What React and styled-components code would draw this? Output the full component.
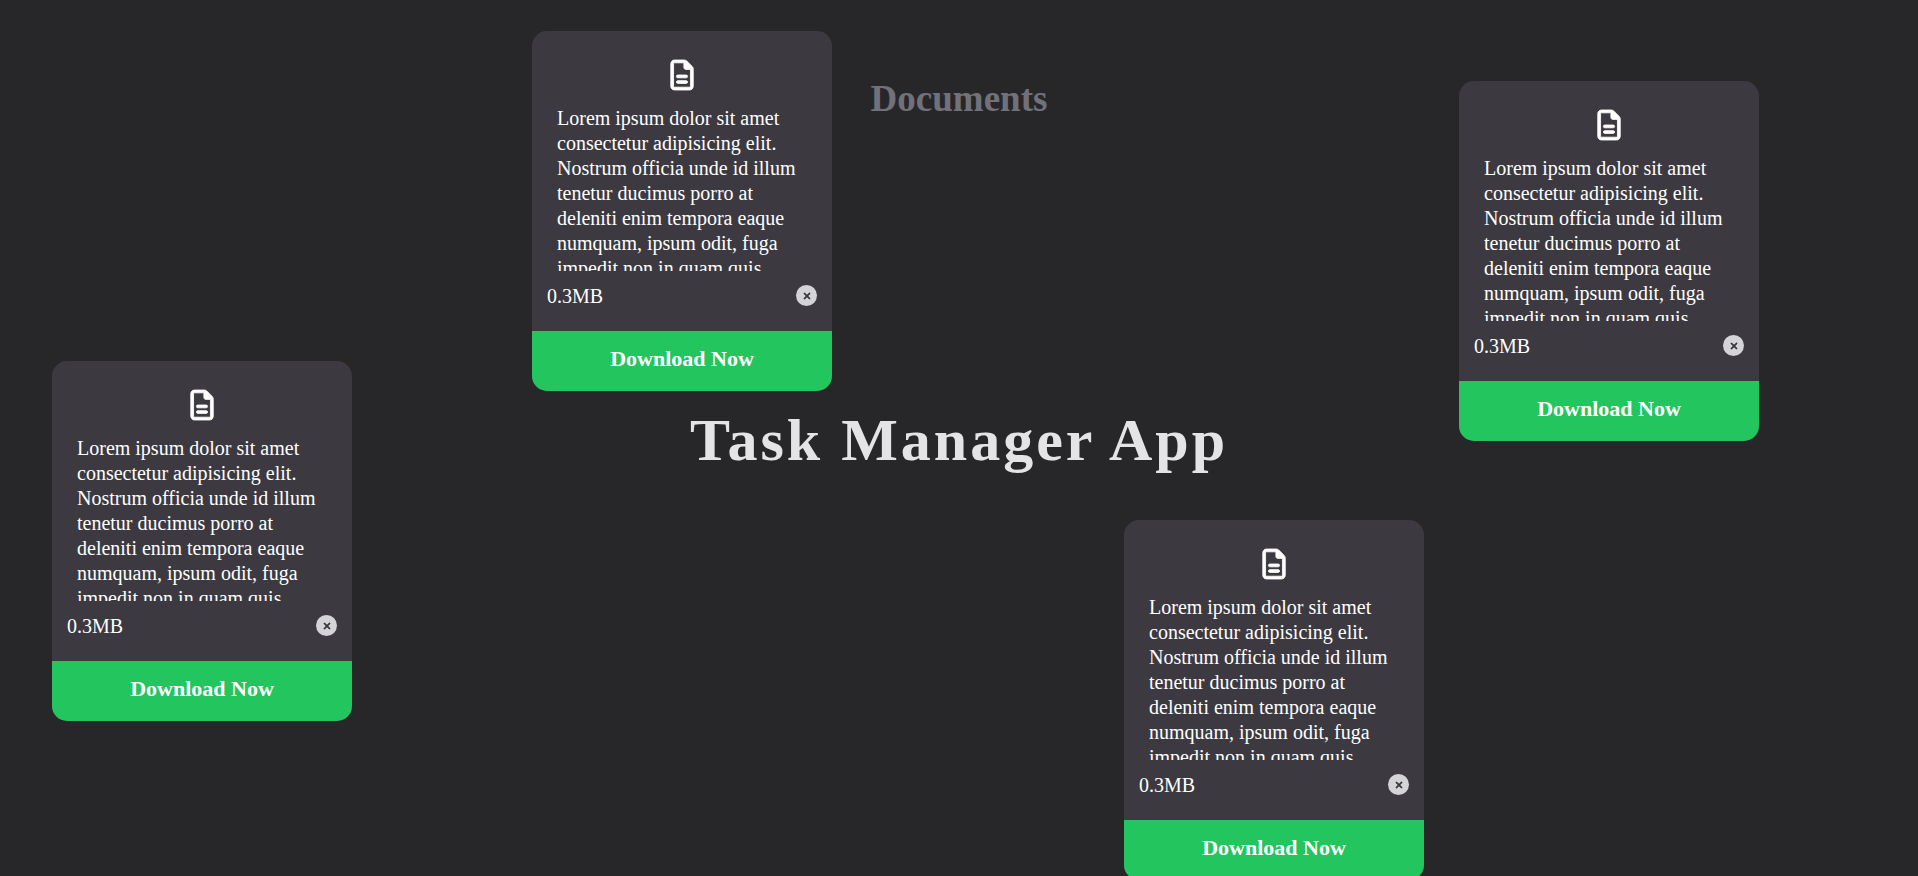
import React from "react";
import styled, { createGlobalStyle } from "styled-components";
import { FaRegFileLines, FaXmark } from "react-icons/fa6";

const GlobalStyle = createGlobalStyle`
  * { box-sizing: border-box; margin: 0; }
  body {
    background: #27272a;
    font-family: "Liberation Serif", "Times New Roman", serif;
  }
`;

const Page = styled.main`
  position: relative;
  display: flex;
  flex-direction: column;
  align-items: center;
  width: 100%;
  height: 100vh;
  overflow: hidden;
`;

const SectionHeading = styled.h2`
  padding-top: 77px;
  font-size: 37px;
  line-height: 44px;
  font-weight: 700;
  color: #71717a;
`;

const Title = styled.h1`
  position: absolute;
  top: 50%;
  left: 50%;
  transform: translate(-50%, -50%);
  white-space: nowrap;
  font-size: 60px;
  line-height: 64px;
  padding-top: 4px;
  letter-spacing: 3px;
  font-weight: 700;
  color: #e4e4e7;
`;

const Card = styled.article`
  position: absolute;
  left: ${({ $x }) => $x}px;
  top: ${({ $y }) => $y}px;
  display: flex;
  flex-direction: column;
  width: 300px;
  height: 360px;
  border-radius: 15px;
  overflow: hidden;
  background: #3c3a40;
  color: #fff;
`;

const FileIcon = styled(FaRegFileLines)`
  align-self: center;
  flex: none;
  margin-top: 29px;
  overflow: visible;
  font-size: 30px;
  stroke-width: 14;
`;

const Description = styled.p`
  height: 165px;
  margin: 16px 25px 0;
  overflow: hidden;
  font-size: 20px;
  line-height: 25px;
`;

const InfoRow = styled.div`
  display: flex;
  flex: 1;
  align-items: center;
  justify-content: space-between;
  padding: 0 15px 11px;
  font-size: 20px;
  line-height: 30px;
`;

const CloseButton = styled.button`
  display: grid;
  place-items: center;
  width: 21px;
  height: 21px;
  padding: 0;
  border: 0;
  border-radius: 50%;
  background: #d4d4d8;
  color: #3c3a40;
  font-size: 10px;
  cursor: pointer;

  svg {
    stroke-width: 32;
  }
`;

const DownloadButton = styled.button`
  flex: none;
  height: 60px;
  padding: 0 0 4px;
  border: 0;
  background: #22c55e;
  color: #fff;
  font-family: inherit;
  font-size: 22px;
  font-weight: 700;
  cursor: pointer;
`;

const text =
  "Lorem ipsum dolor sit amet consectetur adipisicing elit. Nostrum officia unde id illum tenetur ducimus porro at deleniti enim tempora eaque numquam, ipsum odit, fuga impedit non in quam quis.";

const documents = [
  { id: 1, x: 532, y: 31 },
  { id: 2, x: 52, y: 361 },
  { id: 3, x: 1459, y: 81 },
  { id: 4, x: 1124, y: 520 },
];

function DocumentCard({ x, y }) {
  return (
    <Card $x={x} $y={y}>
      <FileIcon aria-hidden="true" />
      <Description>{text}</Description>
      <InfoRow>
        <span>0.3MB</span>
        <CloseButton type="button" aria-label="Remove document">
          <FaXmark />
        </CloseButton>
      </InfoRow>
      <DownloadButton type="button">Download Now</DownloadButton>
    </Card>
  );
}

export default function App() {
  return (
    <>
      <GlobalStyle />
      <Page>
        <SectionHeading>Documents</SectionHeading>
        <Title>Task Manager App</Title>
        {documents.map((doc) => (
          <DocumentCard key={doc.id} x={doc.x} y={doc.y} />
        ))}
      </Page>
    </>
  );
}
